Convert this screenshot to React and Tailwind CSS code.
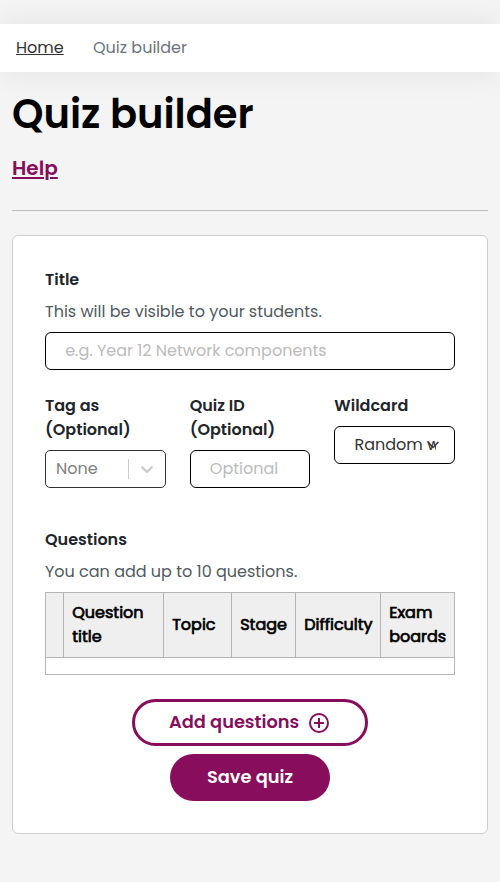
import React from "react";

const columns = [
  { label: "Question title", cls: "w-[100px]" },
  { label: "Topic", cls: "w-[68px]" },
  { label: "Stage", cls: "w-[64px]" },
  { label: "Difficulty", cls: "w-[85px]" },
  { label: "Exam boards", cls: "w-[74px]" },
];

function Label({ children, className = "" }) {
  return <div className={"whitespace-nowrap font-semibold text-[#212529] " + className}>{children}</div>;
}

function Breadcrumb() {
  return (
    <nav className="mt-6 flex h-12 items-center bg-white px-4 shadow-[0_0_32px_rgba(0,0,0,0.08)]">
      <a href="#" className="w-[77px] whitespace-nowrap text-[#333] underline">Home</a>
      <span className="whitespace-nowrap text-[#6c757d]">Quiz builder</span>
    </nav>
  );
}

export default function App() {
  return (
    <div className="flex min-h-[882px] w-full flex-col overflow-hidden bg-[#f4f4f4] font-['Poppins','Inter',sans-serif] text-base leading-6 text-[#212529] antialiased">
      <Breadcrumb />
      <header className="mx-3 h-[139px] border-b border-[#bbb]">
        <h1 className="whitespace-nowrap pt-[18px] text-[40px] font-semibold leading-[48px] text-black">Quiz builder</h1>
        <a href="#" className="mt-[18px] inline-block text-xl font-semibold leading-6 text-[#880d5c] underline decoration-2 underline-offset-2">Help</a>
      </header>

      <main className="mx-3 mt-6 h-[599px] rounded-md border border-[#cfcfcf] bg-white p-8">
        <Label>Title</Label>
        <p className="mt-2 whitespace-nowrap text-[#505a5f]">This will be visible to your students.</p>
        <input
          placeholder="e.g. Year 12 Network components"
          className="mt-2 block h-[38px] w-full rounded-md border border-black bg-white px-[19.2px] pb-2 pt-[6px] placeholder:text-[#bbb]"
        />

        <div className="mt-6 grid h-[94px] grid-cols-3 items-start gap-6">
          <div>
            <Label>Tag as<br />(Optional)</Label>
            <div className="mt-2 flex h-[38px] items-center rounded-[5px] border border-[#333] pl-[10px] text-[#808080]">
              <span className="grow">None</span>
              <span className="h-5 w-px bg-[#ccc]" />
              <svg viewBox="0 0 20 20" className="mx-2 h-5 w-5 shrink-0 fill-[#ccc]">
                <path d="M4.516 7.548c0.436-0.446 1.043-0.481 1.576 0l3.908 3.747 3.908-3.747c0.533-0.481 1.141-0.446 1.574 0 0.436 0.445 0.408 1.197 0 1.615-0.406 0.418-4.695 4.502-4.695 4.502-0.217 0.223-0.502 0.335-0.787 0.335s-0.57-0.112-0.789-0.335c0 0-4.287-4.084-4.695-4.502s-0.436-1.17 0-1.615z" />
              </svg>
            </div>
          </div>
          <div>
            <Label>Quiz ID<br />(Optional)</Label>
            <input
              placeholder="Optional"
              className="mt-2 block h-[38px] w-full rounded-md border border-black bg-white px-[19.2px] pb-2 pt-[6px] placeholder:text-[#bbb]"
            />
          </div>
          <div>
            <Label>Wildcard</Label>
            <div className="relative mt-2 flex h-[38px] items-center rounded-md border border-black pl-[19.2px] text-[#333]">
              <span className="w-[81px] overflow-hidden whitespace-nowrap">Random wildcard</span>
              <svg viewBox="0 0 12 8" className="absolute left-[92px] top-[14px] h-2 w-3 fill-none stroke-[#333] stroke-[1.5]">
                <path d="M1 1l5 5.5 5.5-5.5" />
              </svg>
            </div>
          </div>
        </div>

        <Label className="mt-10">Questions</Label>
        <p className="mt-2 whitespace-nowrap text-[#505a5f]">You can add up to 10 questions.</p>
        <div className="mt-2 h-[83px] border border-[#b5b5b5]">
          <div className="flex h-[65px] border-b border-[#b5b5b5] bg-[#efefef]">
            <div className="w-[17px]" />
            {columns.map((c) => (
              <div key={c.label} className={"flex shrink-0 items-center border-l border-[#b5b5b5] pl-[8.2px] font-normal text-black [-webkit-text-stroke:0.7px_black] " + c.cls}>
                {c.label}
              </div>
            ))}
          </div>
        </div>

        <div className="mt-6 flex flex-col items-center gap-2 text-[17.8px] font-semibold">
          <button className="flex h-[47px] w-[236px] items-center whitespace-nowrap rounded-full border-[3px] border-[#880d5c] pl-[34px] text-[#880d5c]">
            <span className="-mt-0.5 w-[140px] text-left">Add questions</span>
            <svg viewBox="0 0 20 20" className="mt-px h-5 w-5 shrink-0 fill-none stroke-[#880d5c] stroke-2">
              <circle cx="10" cy="10" r="9" />
              <path d="M10 5v10M5 10h10" />
            </svg>
          </button>
          <button className="h-[47px] w-40 whitespace-nowrap rounded-full bg-[#880d5c] pb-0.5 text-white">Save quiz</button>
        </div>
      </main>
    </div>
  );
}
